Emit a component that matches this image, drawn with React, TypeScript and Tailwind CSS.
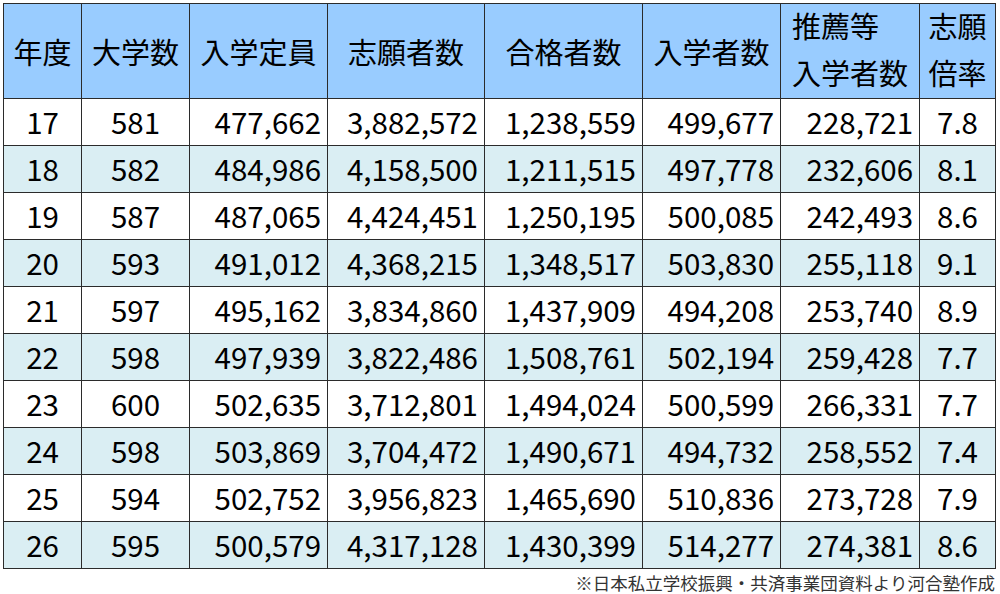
import React from 'react';

type Row = {
  year: string;
  univ: string;
  capacity: string;
  applicants: string;
  passed: string;
  enrolled: string;
  recommended: string;
  ratio: string;
};

const rows: Row[] = [
  { year: '17', univ: '581', capacity: '477,662', applicants: '3,882,572', passed: '1,238,559', enrolled: '499,677', recommended: '228,721', ratio: '7.8' },
  { year: '18', univ: '582', capacity: '484,986', applicants: '4,158,500', passed: '1,211,515', enrolled: '497,778', recommended: '232,606', ratio: '8.1' },
  { year: '19', univ: '587', capacity: '487,065', applicants: '4,424,451', passed: '1,250,195', enrolled: '500,085', recommended: '242,493', ratio: '8.6' },
  { year: '20', univ: '593', capacity: '491,012', applicants: '4,368,215', passed: '1,348,517', enrolled: '503,830', recommended: '255,118', ratio: '9.1' },
  { year: '21', univ: '597', capacity: '495,162', applicants: '3,834,860', passed: '1,437,909', enrolled: '494,208', recommended: '253,740', ratio: '8.9' },
  { year: '22', univ: '598', capacity: '497,939', applicants: '3,822,486', passed: '1,508,761', enrolled: '502,194', recommended: '259,428', ratio: '7.7' },
  { year: '23', univ: '600', capacity: '502,635', applicants: '3,712,801', passed: '1,494,024', enrolled: '500,599', recommended: '266,331', ratio: '7.7' },
  { year: '24', univ: '598', capacity: '503,869', applicants: '3,704,472', passed: '1,490,671', enrolled: '494,732', recommended: '258,552', ratio: '7.4' },
  { year: '25', univ: '594', capacity: '502,752', applicants: '3,956,823', passed: '1,465,690', enrolled: '510,836', recommended: '273,728', ratio: '7.9' },
  { year: '26', univ: '595', capacity: '500,579', applicants: '4,317,128', passed: '1,430,399', enrolled: '514,277', recommended: '274,381', ratio: '8.6' },
];

const cell = 'border border-[#2b2b2b] px-0 leading-none';
const num = `${cell} text-right pr-[6px]`;
const mid = `${cell} text-center`;
const head = `${mid} font-normal text-[29px]`;

const App: React.FC = () => {
  return (
    <div
      className="w-[1000px] h-[594px] bg-white text-black pt-[3px] pl-[3px]"
      style={{ fontFamily: '"Noto Sans CJK JP", "Noto Sans", sans-serif' }}
    >
      <table className="table-fixed border-collapse w-[992px] text-[29.5px]">
        <colgroup>
          <col className="w-[78px]" />
          <col className="w-[108px]" />
          <col className="w-[138px]" />
          <col className="w-[157px]" />
          <col className="w-[158px]" />
          <col className="w-[138px]" />
          <col className="w-[139px]" />
          <col className="w-[76px]" />
        </colgroup>
        <thead>
          <tr className="h-[95px] bg-[#99ccff]">
            <th className={head}>年度</th>
            <th className={head}>大学数</th>
            <th className={head}>入学定員</th>
            <th className={head}>志願者数</th>
            <th className={head}>合格者数</th>
            <th className={head}>入学者数</th>
            <th className={head}>
              <div className="inline-block text-left leading-[47px] -mt-[4px]">
                推薦等
                <br />
                入学者数
              </div>
            </th>
            <th className={head}>
              <div className="inline-block text-left leading-[47px] -mt-[4px]">
                志願
                <br />
                倍率
              </div>
            </th>
          </tr>
        </thead>
        <tbody>
          {rows.map((r, i) => (
            <tr key={r.year} className={`h-[47px] ${i % 2 === 1 ? 'bg-[#daeef3]' : 'bg-white'}`}>
              <td className={mid}>{r.year}</td>
              <td className={mid}>{r.univ}</td>
              <td className={num}>{r.capacity}</td>
              <td className={num}>{r.applicants}</td>
              <td className={num}>{r.passed}</td>
              <td className={num}>{r.enrolled}</td>
              <td className={num}>{r.recommended}</td>
              <td className={mid}>{r.ratio}</td>
            </tr>
          ))}
        </tbody>
      </table>
      <div className="w-[992px] text-right text-[17.5px] text-[#333] mt-[5px] leading-none">
        ※日本私立学校振興・共済事業団資料より河合塾作成
      </div>
    </div>
  );
};

export default App;
